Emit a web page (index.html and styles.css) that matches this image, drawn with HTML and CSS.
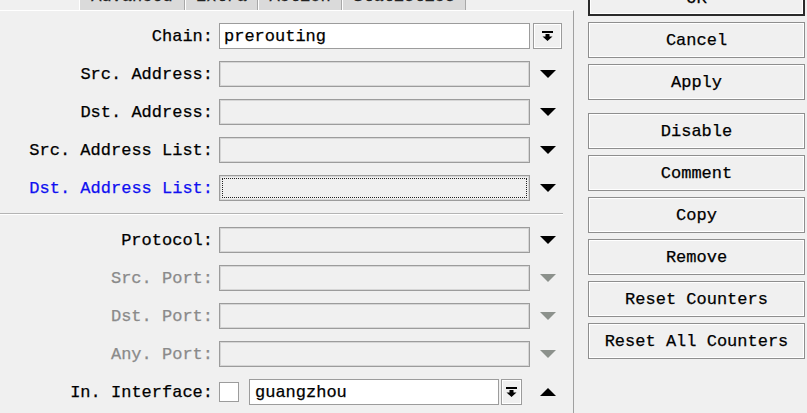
FILE: index.html
```html
<!DOCTYPE html>
<html lang="en">
<head>
  <meta charset="UTF-8">
  <title>Filter Rule</title>
  <link rel="stylesheet" href="styles.css">
</head>
<body>
  <div class="dialog">
    <div class="main">
      <div class="tabs">
        <div class="tab tab-advanced">Advanced</div>
        <div class="tab tab-extra">Extra</div>
        <div class="tab tab-action">Action</div>
        <div class="tab tab-stats">Statistics</div>
      </div>
      <div class="panel">
        <div class="group">
          <div class="row">
            <span class="label">Chain:</span>
            <div class="input input-set">prerouting</div>
            <button class="drop"><svg width="11" height="10" viewBox="0 0 11 10"><rect x="0" y="0" width="11" height="2"/><path d="M3.5 3h4v2.5h3L5.5 10 0.5 5.5h3z"/></svg></button>
          </div>
          <div class="row">
            <span class="label">Src. Address:</span>
            <div class="input"></div>
            <span class="arrow"><svg width="16" height="8" viewBox="0 0 16 8"><path d="M0 0h16L8 8z"/></svg></span>
          </div>
          <div class="row">
            <span class="label">Dst. Address:</span>
            <div class="input"></div>
            <span class="arrow"><svg width="16" height="8" viewBox="0 0 16 8"><path d="M0 0h16L8 8z"/></svg></span>
          </div>
          <div class="row">
            <span class="label">Src. Address List:</span>
            <div class="input"></div>
            <span class="arrow"><svg width="16" height="8" viewBox="0 0 16 8"><path d="M0 0h16L8 8z"/></svg></span>
          </div>
          <div class="row">
            <span class="label label-active">Dst. Address List:</span>
            <div class="input input-focus"></div>
            <span class="arrow"><svg width="16" height="8" viewBox="0 0 16 8"><path d="M0 0h16L8 8z"/></svg></span>
          </div>
        </div>
        <div class="sep"></div>
        <div class="group">
          <div class="row">
            <span class="label">Protocol:</span>
            <div class="input"></div>
            <span class="arrow"><svg width="16" height="8" viewBox="0 0 16 8"><path d="M0 0h16L8 8z"/></svg></span>
          </div>
          <div class="row">
            <span class="label label-off">Src. Port:</span>
            <div class="input"></div>
            <span class="arrow arrow-off"><svg width="16" height="8" viewBox="0 0 16 8"><path d="M0 0h16L8 8z"/></svg></span>
          </div>
          <div class="row">
            <span class="label label-off">Dst. Port:</span>
            <div class="input"></div>
            <span class="arrow arrow-off"><svg width="16" height="8" viewBox="0 0 16 8"><path d="M0 0h16L8 8z"/></svg></span>
          </div>
          <div class="row">
            <span class="label label-off">Any. Port:</span>
            <div class="input"></div>
            <span class="arrow arrow-off"><svg width="16" height="8" viewBox="0 0 16 8"><path d="M0 0h16L8 8z"/></svg></span>
          </div>
          <div class="row">
            <span class="label">In. Interface:</span>
            <span class="check"></span>
            <div class="input input-set input-short">guangzhou</div>
            <button class="drop drop-small"><svg width="11" height="10" viewBox="0 0 11 10"><rect x="0" y="0" width="11" height="2"/><path d="M3.5 3h4v2.5h3L5.5 10 0.5 5.5h3z"/></svg></button>
            <span class="arrow arrow-up"><svg width="16" height="8" viewBox="0 0 16 8"><path d="M0 8h16L8 0z"/></svg></span>
          </div>
        </div>
      </div>
    </div>
    <div class="side">
      <button class="btn btn-default">OK</button>
      <button class="btn">Cancel</button>
      <button class="btn">Apply</button>
      <button class="btn btn-gap">Disable</button>
      <button class="btn">Comment</button>
      <button class="btn">Copy</button>
      <button class="btn">Remove</button>
      <button class="btn">Reset Counters</button>
      <button class="btn">Reset All Counters</button>
    </div>
  </div>
</body>
</html>
```

FILE: styles.css
```css
body {
  margin: 0;
  background-color: #F0F0F0;
  color: #000000;
  font-family: 'Liberation Mono', 'Courier New', monospace;
  font-size: 17px;
  -webkit-text-stroke: 0.25px currentColor;
  overflow: hidden;
}

.dialog {
  display: flex;
  height: 413px;
}

.main {
  width: 574px;
  flex: none;
  display: flex;
  flex-direction: column;
}

/* tab strip, scrolled so only its lower edge shows */
.tabs {
  height: 10px;
  margin-left: 79px;
  display: flex;
  align-items: flex-end;
  overflow: hidden;
}

.tab {
  flex: none;
  height: 28px;
  box-sizing: border-box;
  display: flex;
  align-items: flex-end;
  justify-content: center;
  padding-bottom: 5px;
  line-height: 17px;
  background-color: #DADADA;
  border-left: 1px solid #FFFFFF;
  border-right: 1px solid #A8A8A8;
  color: #222222;
}

.tab-advanced { width: 106px; }
.tab-extra { width: 73px; }
.tab-action { width: 84px; }
.tab-stats { width: 124px; }

.panel {
  flex-grow: 1;
  border-top: 1px solid #FFFFFF;
  border-right: 1px solid #A0A0A0;
  padding-top: 12px;
}

.group {
  display: flex;
  flex-direction: column;
  gap: 12px;
}

.row {
  display: flex;
  align-items: center;
  height: 26px;
}

.label {
  width: 213px;
  flex: none;
  margin-right: 6px;
  text-align: right;
  white-space: pre;
}

.label-active {
  color: #1010F0;
}

.label-off {
  color: #8A8A8A;
}

.input {
  width: 311px;
  height: 26px;
  flex: none;
  box-sizing: border-box;
  border: 1px solid #9C9C9C;
  box-shadow: inset 0 0 0 1px #D6D6D6;
  background-color: #F0F0F0;
  padding-left: 4px;
  display: flex;
  align-items: center;
  white-space: pre;
}

.input-set {
  background-color: #FFFFFF;
  box-shadow: none;
}

.input-focus {
  outline: 1px dotted #222222;
  outline-offset: -4px;
}

.input-short {
  width: 250px;
  padding-left: 5px;
}

.drop {
  width: 29px;
  height: 26px;
  margin: 0 0 0 3px;
  padding: 0;
  flex: none;
  box-sizing: border-box;
  border: 1px solid #9C9C9C;
  box-shadow: inset 0 0 0 1px #FFFFFF;
  background-color: #F0F0F0;
  display: flex;
  align-items: center;
  justify-content: center;
  fill: #000000;
}

.drop-small {
  width: 21px;
  margin-left: 2px;
}

.check {
  width: 20px;
  height: 20px;
  flex: none;
  box-sizing: border-box;
  margin-right: 10px;
  border: 1px solid #9C9C9C;
  background-color: #FFFFFF;
}

.arrow {
  width: 30px;
  margin-left: 3px;
  flex: none;
  display: flex;
  justify-content: center;
  fill: #000000;
}

.arrow-off {
  fill: #8C918C;
}

.arrow-up {
  margin-left: 11px;
}

.sep {
  width: 563px;
  margin: 12px 0 12px;
  border-top: 1px solid #B4B4B4;
  border-bottom: 1px solid #FFFFFF;
}

.side {
  margin-top: -20px;
  padding-left: 14px;
  display: flex;
  flex-direction: column;
  gap: 6px;
}

.btn {
  width: 217px;
  height: 36px;
  box-sizing: border-box;
  font-family: inherit;
  font-size: 17px;
  color: #000000;
  background-color: #F0F0F0;
  border: 1px solid #8E8E8E;
  box-shadow: inset 0 0 0 1px #FFFFFF;
  padding: 0;
  white-space: pre;
}

.btn-default {
  border: 2px solid #2A2A2A;
}

.btn-gap {
  margin-top: 7px;
}
```
